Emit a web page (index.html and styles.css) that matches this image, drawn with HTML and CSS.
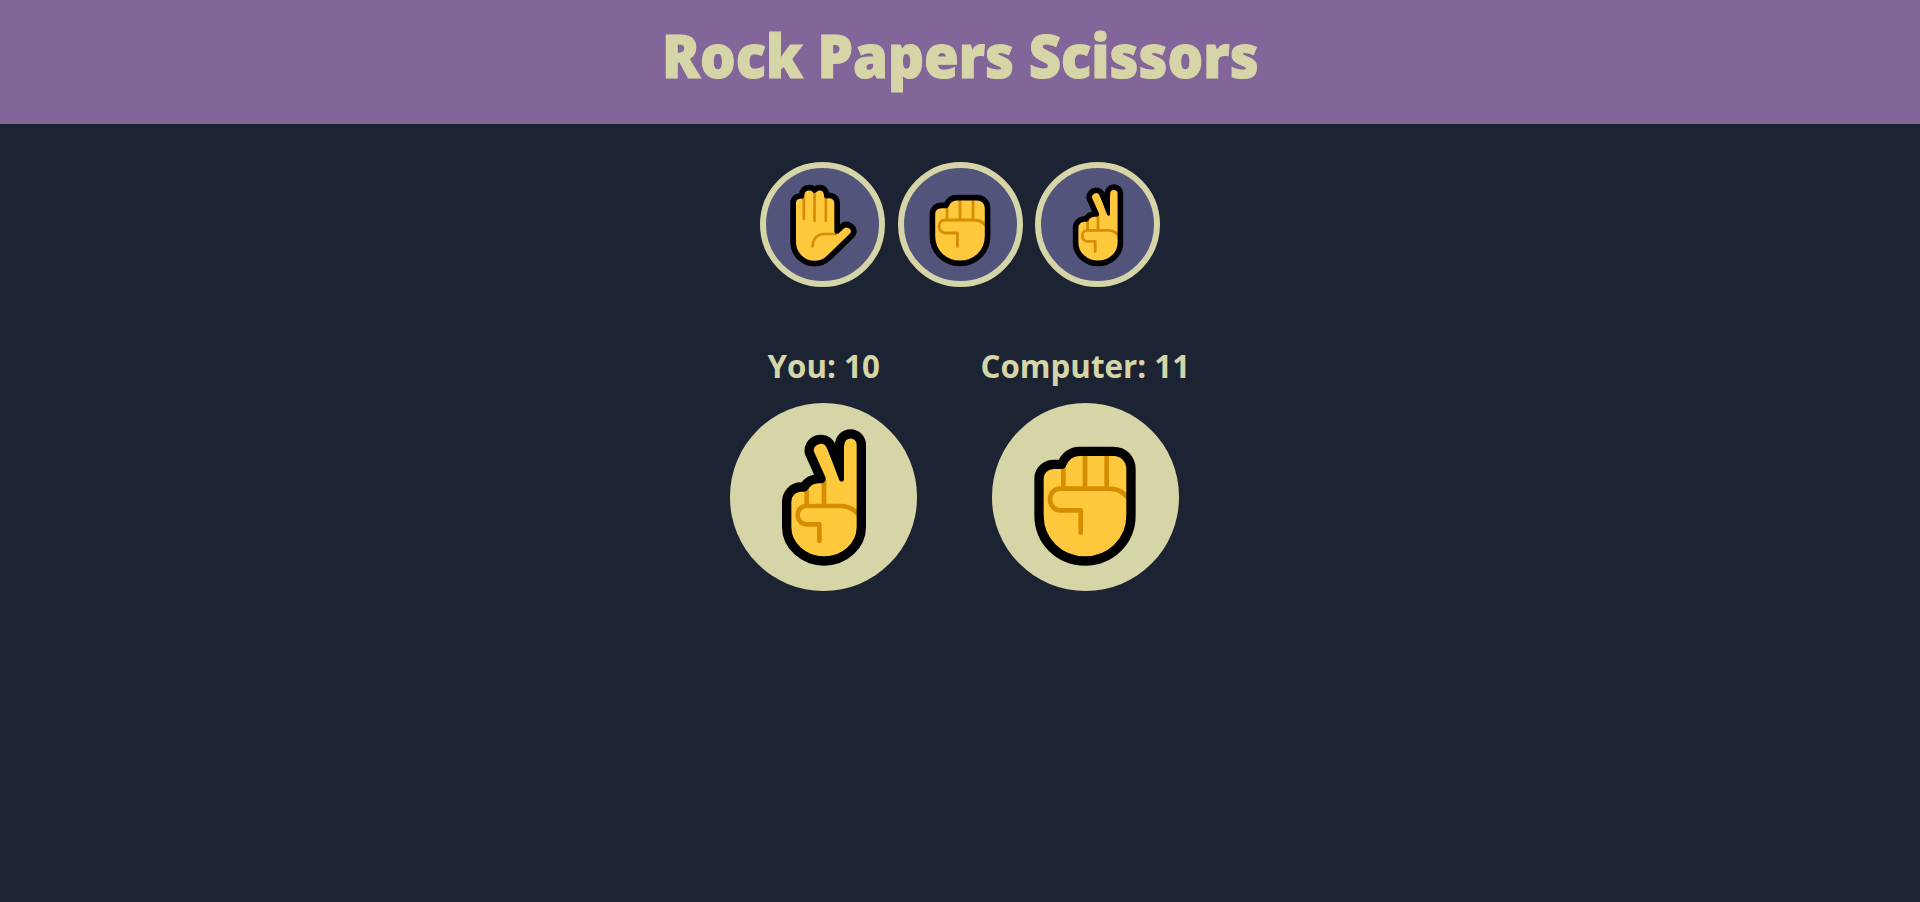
FILE: index.html
```html
<!DOCTYPE html>
<html lang="en">
<head>
<meta charset="utf-8">
<title>Rock Papers Scissors</title>
<link rel="stylesheet" href="styles.css">
</head>
<body>
<svg class="sprite" aria-hidden="true">
  <symbol id="paper" viewBox="82.5 73 270 270">
    <path class="skin" d="M128 258V142C128 128 138 120 152 121C153 106 163 96 176 96C186 96 190 100 192 103C196 98 202 96 208 96C220 96 228 106 229 120C242 116 260 124 260 142V226L276 211C289 200 310 212 310 228C310 234 306 238 302 242L238 304C226 316 210 324 192 324C156 324 128 295 128 258Z"/>
    <path class="crease thin" d="M160 112V190M192 105V195M226 118V195M186 272C188 250 200 235 220 235H256"/>
    <path class="outline thin" d="M128 258V142C128 128 138 120 152 121C153 106 163 96 176 96C186 96 190 100 192 103C196 98 202 96 208 96C220 96 228 106 229 120C242 116 260 124 260 142V226L276 211C289 200 310 212 310 228C310 234 306 238 302 242L238 304C226 316 210 324 192 324C156 324 128 295 128 258Z"/>
  </symbol>
  <symbol id="rock" viewBox="90 80 450 450">
    <path class="skin" d="M177 250C177 225 197 207 222 207H245C255 182 275 168 298 168H400C430 168 453 190 453 222V360C453 440 390 497 315 497C240 497 177 440 177 360Z"/>
    <path class="crease" d="M250 210V275M315 170V275M380 170V275M456 335C445 300 420 280 385 280H240C222 280 210 295 210 312C210 330 225 345 240 345H302V412"/>
    <path class="outline" d="M177 250C177 225 197 207 222 207H245C255 182 275 168 298 168H400C430 168 453 190 453 222V360C453 440 390 497 315 497C240 497 177 440 177 360Z"/>
  </symbol>
  <symbol id="scissors" viewBox="87 80 450 450">
    <path class="skin" d="M200 395V320C200 295 218 275 243 275H252C262 258 275 250 296 250H303L268 172A34.4 34.4 0 0 1 331 148L347 183L359 148A32.5 32.5 0 0 1 424 148V395C424 450 375 497 312 497C250 497 200 450 200 395Z"/>
    <path class="crease" d="M260 278V328M312 255V330M428 385C418 350 392 332 362 332H258C243 332 233 345 233 360C233 375 245 387 260 387H298V437"/>
    <path class="outline" d="M200 395V320C200 295 218 275 243 275H252C262 258 275 250 296 250H303L268 172A34.4 34.4 0 0 1 331 148L347 183L359 148A32.5 32.5 0 0 1 424 148V395C424 450 375 497 312 497C250 497 200 450 200 395Z"/>
    <path class="wedge" d="M319 152L358 255Q365 263 372 255V150L347 165Z"/>
  </symbol>
</svg>

<header class="banner">
  <h1 class="title">Rock Papers Scissors</h1>
</header>

<main class="game">
  <div class="choices">
    <button class="choice" type="button" aria-label="Paper"><svg class="choice-icon"><use href="#paper"/></svg></button>
    <button class="choice" type="button" aria-label="Rock"><svg class="choice-icon"><use href="#rock"/></svg></button>
    <button class="choice" type="button" aria-label="Scissors"><svg class="choice-icon"><use href="#scissors"/></svg></button>
  </div>

  <div class="results">
    <section class="player">
      <h2 class="score">You: 10</h2>
      <div class="hand"><svg class="hand-icon"><use href="#scissors"/></svg></div>
    </section>
    <section class="player">
      <h2 class="score">Computer: 11</h2>
      <div class="hand"><svg class="hand-icon"><use href="#rock"/></svg></div>
    </section>
  </div>
</main>
</body>
</html>
```

FILE: styles.css
```css
* {
  box-sizing: border-box;
}

html,
body {
  margin: 0;
  height: 100%;
}

body {
  background: #1c2333;
  color: #d6d5a8;
  font-family: "Open Sans", sans-serif;
  overflow: hidden;
}

.sprite {
  display: none;
}

.banner {
  height: 124px;
  padding-bottom: 16px;
  background: #826699;
  display: flex;
  align-items: center;
  justify-content: center;
}

.title {
  margin: 0;
  font-size: 61px;
  font-weight: 800;
  line-height: 1;
  color: #d6d5a8;
  -webkit-text-stroke: 1.2px #d6d5a8;
  transform: scaleX(0.92);
}

.game {
  display: flex;
  flex-direction: column;
  align-items: center;
}

.choices {
  width: 400px;
  margin-top: 38px;
  display: flex;
  justify-content: space-between;
}

.choice {
  width: 125px;
  height: 125px;
  padding: 0;
  border: 6px solid #d6d5a8;
  border-radius: 50%;
  background: #52547c;
  display: flex;
  align-items: center;
  justify-content: center;
}

.choice-icon {
  width: 90px;
  height: 90px;
  display: block;
}

.results {
  margin-top: 58px;
  display: flex;
  gap: 63px;
}

.player {
  display: flex;
  flex-direction: column;
  align-items: center;
}

.score {
  margin: 0 0 16px;
  font-size: 31.3px;
  font-weight: 700;
  line-height: 42px;
  min-width: 187.5px;
  text-align: center;
}

.hand {
  width: 187.5px;
  height: 187.5px;
  border-radius: 50%;
  background: #d6d5a8;
  display: flex;
  align-items: center;
  justify-content: center;
}

.hand-icon {
  width: 150px;
  height: 150px;
  display: block;
}

.skin {
  fill: #ffc83d;
}

.outline {
  fill: none;
  stroke: #000;
  stroke-width: 28;
  stroke-linejoin: round;
}

.wedge {
  fill: #000;
}

.crease {
  fill: none;
  stroke: #d68e00;
  stroke-width: 14;
  stroke-linecap: round;
  stroke-linejoin: round;
}

.outline.thin {
  stroke-width: 17;
}

.crease.thin {
  stroke-width: 8;
}
```
